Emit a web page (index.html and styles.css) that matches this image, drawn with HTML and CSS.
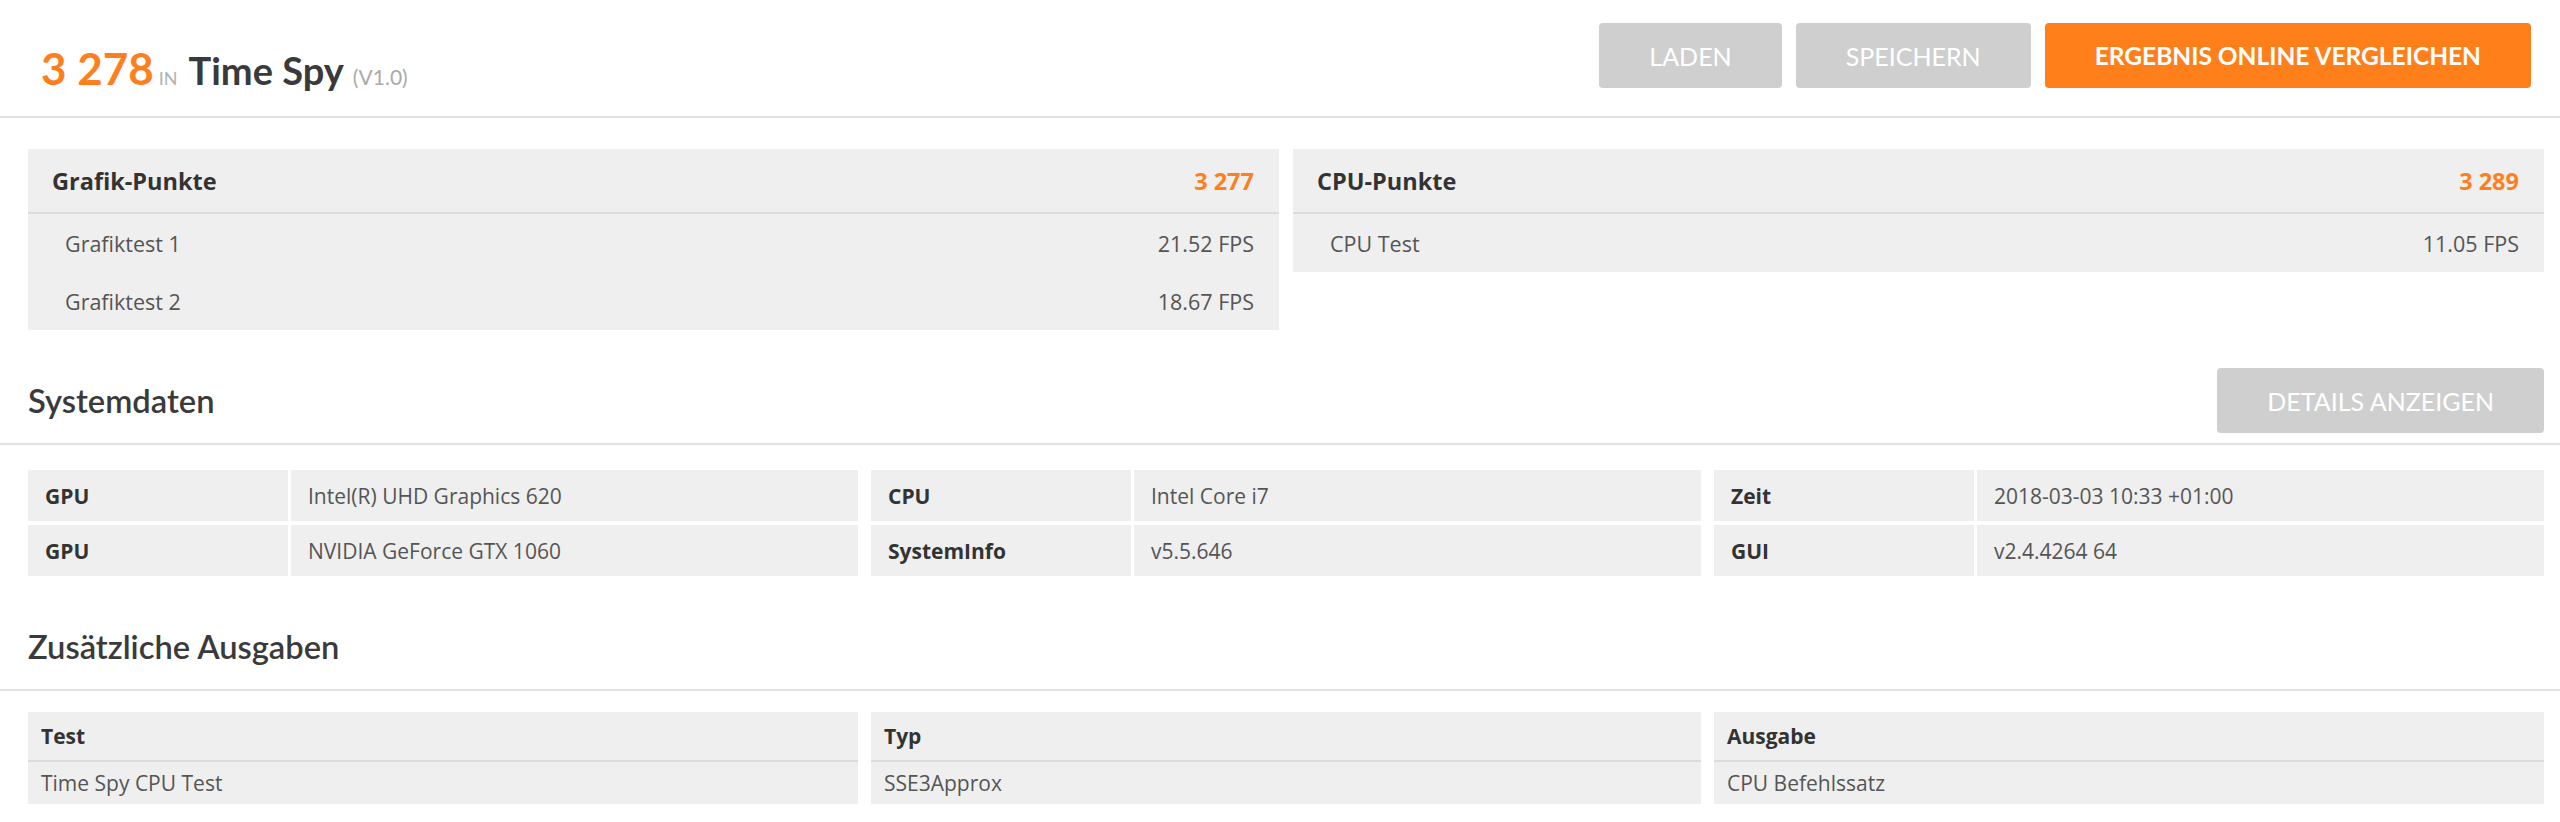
FILE: index.html
```html
<!DOCTYPE html>
<html lang="de">
<head>
<meta charset="utf-8">
<title>3 278 in Time Spy</title>
<link rel="stylesheet" href="styles.css">
</head>
<body>
<header class="topbar">
  <div class="title"><span class="score">3 278</span><span class="in">IN</span><span class="name">Time Spy</span><span class="ver">(V1.0)</span></div>
  <div class="actions">
    <div class="btn">Laden</div>
    <div class="btn">Speichern</div>
    <div class="btn primary">Ergebnis online vergleichen</div>
  </div>
</header>

<section class="scores">
  <div class="panel">
    <div class="panel-head"><span>Grafik-Punkte</span><span class="pts">3 277</span></div>
    <div class="panel-row"><span>Grafiktest 1</span><span>21.52 FPS</span></div>
    <div class="panel-row"><span>Grafiktest 2</span><span>18.67 FPS</span></div>
  </div>
  <div class="panel">
    <div class="panel-head"><span>CPU-Punkte</span><span class="pts">3 289</span></div>
    <div class="panel-row"><span>CPU Test</span><span>11.05 FPS</span></div>
  </div>
</section>

<div class="section-head">
  <h2>Systemdaten</h2>
  <div class="btn">Details anzeigen</div>
</div>

<section class="systable">
  <div class="sgroup">
    <div class="lab">GPU</div><div class="val">Intel(R) UHD Graphics 620</div>
    <div class="lab">GPU</div><div class="val">NVIDIA GeForce GTX 1060</div>
  </div>
  <div class="sgroup">
    <div class="lab">CPU</div><div class="val">Intel Core i7</div>
    <div class="lab">SystemInfo</div><div class="val">v5.5.646</div>
  </div>
  <div class="sgroup">
    <div class="lab">Zeit</div><div class="val">2018-03-03 10:33 +01:00</div>
    <div class="lab">GUI</div><div class="val">v2.4.4264 64</div>
  </div>
</section>

<div class="section-head">
  <h2>Zusätzliche Ausgaben</h2>
</div>

<section class="outputs">
  <div class="ocol"><div class="ohead">Test</div><div class="obody">Time Spy CPU Test</div></div>
  <div class="ocol"><div class="ohead">Typ</div><div class="obody">SSE3Approx</div></div>
  <div class="ocol"><div class="ohead">Ausgabe</div><div class="obody">CPU Befehlssatz</div></div>
</section>
</body>
</html>
```

FILE: styles.css
```css
* { box-sizing: border-box; }

body {
  margin: 0;
  background: #ffffff;
  font-family: "Open Sans", "Liberation Sans", sans-serif;
  color: #333333;
}

/* top bar */
.topbar {
  display: flex;
  justify-content: space-between;
  align-items: flex-start;
  height: 118px;
  padding: 0 29px 0 41px;
  border-bottom: 2px solid #e2e2e2;
}

.title {
  font-family: Lato, "Open Sans", sans-serif;
  font-size: 44px;
  line-height: 1.2;
  margin-top: 42px;
  white-space: nowrap;
}

.score { color: #ff7f1e; font-weight: 700; }
.in { font-size: 18px; color: #b3b3b3; margin: 0 11px 0 5px; }
.name { font-size: 38px; font-weight: 700; color: #3a3a3a; }
.ver { font-size: 21px; color: #aaaaaa; margin-left: 9px; }

.actions {
  display: flex;
  gap: 14px;
  margin-top: 23px;
}

.btn {
  height: 65px;
  padding: 0 50px;
  border-radius: 4px;
  background: #cfcfcf;
  color: #ffffff;
  font-family: Lato, "Open Sans", sans-serif;
  font-size: 25px;
  display: flex;
  align-items: center;
  text-transform: uppercase;
  white-space: nowrap;
}

.btn.primary {
  background: #ff7f1a;
  font-weight: 700;
  font-size: 24.5px;
  padding: 0 50px;
}

/* score panels */
.scores {
  display: grid;
  grid-template-columns: 1fr 1fr;
  gap: 14px;
  margin: 31px 16px 0 28px;
  align-items: start;
}

.panel { background: #efefef; }

.panel-head {
  height: 65px;
  display: flex;
  justify-content: space-between;
  align-items: center;
  padding: 0 25px 0 24px;
  border-bottom: 2px solid #dcdcdc;
  font-size: 23.5px;
  font-weight: 700;
  color: #333333;
}

.pts { color: #ff7f1e; }

.panel-row {
  height: 58px;
  display: flex;
  justify-content: space-between;
  align-items: center;
  padding: 0 25px 0 37px;
  font-size: 21.5px;
  color: #555555;
}

/* section heads */
.section-head {
  display: flex;
  justify-content: space-between;
  align-items: center;
  height: 77px;
  margin-top: 38px;
  padding: 0 16px 10px 28px;
  border-bottom: 2px solid #e2e2e2;
}

.section-head h2 {
  margin: 0;
  font-family: Lato, "Open Sans", sans-serif;
  font-size: 32.7px;
  font-weight: 600;
  color: #3a3a3a;
}

/* system table */
.systable {
  display: grid;
  grid-template-columns: 1fr 1fr 1fr;
  gap: 13px;
  margin: 25px 16px 0 28px;
}

.sgroup {
  display: grid;
  grid-template-columns: 260px 1fr;
  grid-auto-rows: 51px;
  gap: 4px 3px;
}

.sgroup > div {
  background: #efefef;
  display: flex;
  align-items: center;
  padding-left: 17px;
  font-size: 21px;
}

.lab { font-weight: 700; color: #333333; }
.val { color: #555555; }

/* additional outputs */
.outputs {
  display: grid;
  grid-template-columns: 1fr 1fr 1fr;
  gap: 13px;
  margin: 21px 16px 0 28px;
}

.ocol { background: #efefef; }

.ohead {
  height: 50px;
  display: flex;
  align-items: center;
  padding-left: 13px;
  border-bottom: 2px solid #dcdcdc;
  font-size: 21px;
  font-weight: 700;
  color: #333333;
}

.obody {
  height: 42px;
  display: flex;
  align-items: center;
  padding-left: 13px;
  font-size: 21px;
  color: #555555;
}
```
